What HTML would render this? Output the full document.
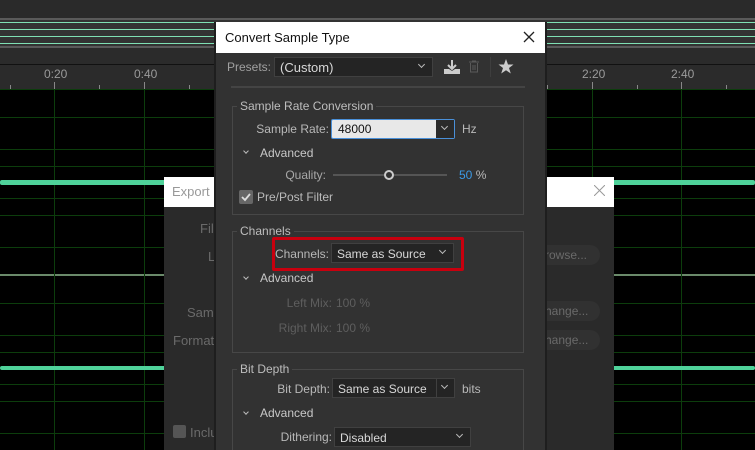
<!DOCTYPE html>
<html style="overflow:hidden;width:755px;height:450px"><head><style>
*{margin:0;padding:0;box-sizing:border-box}
body{width:755px;height:450px;overflow:hidden;background:#000;font-family:"Liberation Sans",sans-serif;position:relative}
.a{position:absolute}
.t{position:absolute;font-size:12px;color:#b8b8b8;white-space:nowrap}
.d{color:#6a6a6a}
.hl{position:absolute;left:0;width:755px;height:1px;background:#0c3d0c}
.vl{position:absolute;top:89px;width:1px;height:361px;background:#0c3d0c}
.wave{position:absolute;left:0;width:755px;height:5px;background:#4fd29a;border-radius:2px}
.box{position:absolute;border:1px solid #474747}
.dd{position:absolute;background:#242424;border:1px solid #404040;color:#d8d8d8;font-size:12px;padding:3px 0 0 5px}
.chev{position:absolute;right:8px;top:4px;width:5px;height:5px;border-right:1px solid #bbb;border-bottom:1px solid #bbb;transform:rotate(45deg)}
.sec{position:absolute;font-size:12px;color:#bdbdbd;background:#323232;padding:0 3px}
</style></head><body>
<div class="a" style="left:0;top:0;width:755px;height:18px;background:#2a2a2a"></div>
<div class="a" style="left:0;top:18px;width:755px;height:30px;background:#333"></div>
<div class="a" style="left:0;top:18px;width:755px;height:2px;background:#5a5a5a"></div>
<div class="a" style="left:0;top:46px;width:755px;height:2px;background:#5a5a5a"></div>
<div class="a" style="left:0;top:22px;width:755px;height:1px;background:#7fe0b4"></div>
<div class="a" style="left:0;top:29px;width:755px;height:1px;background:#7fe0b4"></div>
<div class="a" style="left:0;top:36px;width:755px;height:1px;background:#7fe0b4"></div>
<div class="a" style="left:0;top:43px;width:755px;height:1px;background:#7fe0b4"></div>
<div class="a" style="left:0;top:48px;width:755px;height:16px;background:#2b2b2b"></div>
<div class="a" style="left:0;top:64px;width:755px;height:1px;background:#111"></div>
<div class="a" style="left:0;top:65px;width:755px;height:24px;background:#2b2b2b"></div>
<div class="t" style="left:44px;top:67px;color:#9a9a9a">0:20</div>
<div class="t" style="left:134px;top:67px;color:#9a9a9a">0:40</div>
<div class="t" style="left:582px;top:67px;color:#9a9a9a">2:20</div>
<div class="t" style="left:671px;top:67px;color:#9a9a9a">2:40</div>
<div class="a" style="left:10px;top:85px;width:1px;height:4px;background:#888"></div>
<div class="a" style="left:54px;top:82px;width:1px;height:7px;background:#888"></div>
<div class="a" style="left:99px;top:85px;width:1px;height:4px;background:#888"></div>
<div class="a" style="left:144px;top:82px;width:1px;height:7px;background:#888"></div>
<div class="a" style="left:189px;top:85px;width:1px;height:4px;background:#888"></div>
<div class="a" style="left:547px;top:85px;width:1px;height:4px;background:#888"></div>
<div class="a" style="left:592px;top:82px;width:1px;height:7px;background:#888"></div>
<div class="a" style="left:637px;top:85px;width:1px;height:4px;background:#888"></div>
<div class="a" style="left:681px;top:82px;width:1px;height:7px;background:#888"></div>
<div class="a" style="left:726px;top:85px;width:1px;height:4px;background:#888"></div>
<div class="hl" style="top:89px"></div><div class="hl" style="top:117px"></div><div class="hl" style="top:149px"></div><div class="hl" style="top:166px"></div><div class="hl" style="top:198px"></div><div class="hl" style="top:215px"></div><div class="hl" style="top:247px"></div>
<div class="a" style="left:0;top:274px;width:755px;height:2px;background:#6a8a6a"></div>
<div class="hl" style="top:303px"></div><div class="hl" style="top:335px"></div><div class="hl" style="top:352px"></div><div class="hl" style="top:384px"></div><div class="hl" style="top:401px"></div><div class="hl" style="top:433px"></div>
<div class="vl" style="left:54px"></div><div class="vl" style="left:144px"></div><div class="vl" style="left:592px"></div><div class="vl" style="left:681px"></div>
<div class="wave" style="top:180px"></div>
<div class="wave" style="top:366px;height:4px"></div>
<div class="a" style="left:164px;top:177px;width:450px;height:273px;background:#2a2a2a"></div>
<div class="a" style="left:164px;top:177px;width:450px;height:30px;background:#fff"></div>
<div class="t" style="left:172px;top:184px;font-size:13px;color:#999">Export F</div>
<svg class="a" style="left:594px;top:185px" width="11" height="11"><path d="M0 0L11 11M11 0L0 11" stroke="#999" stroke-width="1"/></svg>
<div class="t d" style="left:200px;top:221px;font-size:13px">File</div>
<div class="t d" style="left:208px;top:249px;font-size:13px">Lo</div>
<div class="t d" style="left:187px;top:305px;font-size:13px">Samp</div>
<div class="t d" style="left:173px;top:333px;font-size:13px">Format S</div>
<div class="a" style="left:173px;top:425px;width:13px;height:13px;background:#555;border-radius:2px"></div>
<div class="t d" style="left:190px;top:425px;font-size:13px">Inclu</div>
<div class="a" style="left:530px;top:245px;width:70px;height:20px;background:#313131;border-radius:10px"></div>
<div class="t d" style="left:545px;top:248px">rowse...</div>
<div class="a" style="left:530px;top:301px;width:70px;height:20px;background:#313131;border-radius:10px"></div>
<div class="t d" style="left:545px;top:304px">hange...</div>
<div class="a" style="left:530px;top:330px;width:70px;height:20px;background:#313131;border-radius:10px"></div>
<div class="t d" style="left:545px;top:333px">hange...</div>
<div class="a" style="left:214px;top:22px;width:333px;height:428px;background:#1e1e1e"></div>
<div class="a" style="left:216px;top:22px;width:329px;height:428px;background:#323232"></div>
<div class="a" style="left:216px;top:22px;width:329px;height:31px;background:#fff"></div>
<div class="t" style="left:225px;top:30px;font-size:13px;color:#111">Convert Sample Type</div>
<svg class="a" style="left:523px;top:31px" width="12" height="12"><path d="M1 1L11 11M11 1L1 11" stroke="#222" stroke-width="1.3"/></svg>
<div class="t" style="right:484px;top:60px;color:#a0a0a0">Presets:</div>
<div class="dd" style="left:274px;top:57px;width:159px;height:20px;font-size:13px;padding-top:2px">(Custom)<div class="chev"></div></div>
<svg class="a" style="left:443px;top:59px" width="18" height="16"><path d="M9 1V9M5 6L9 10L13 6" stroke="#ccc" stroke-width="2" fill="none"/><path d="M1 10H6L9 12L12 10H17V15H1Z" fill="#ccc"/></svg>
<svg class="a" style="left:469px;top:60px" width="10" height="13"><path d="M0 2H10M3 1H7M1.5 3V12H8.5V3M4 5V10M6 5V10" stroke="#5a5a5a" fill="none"/></svg>
<div class="a" style="left:490px;top:57px;width:1px;height:20px;background:#3e3e3e"></div>
<svg class="a" style="left:498px;top:59px" width="16" height="15"><path d="M8 0L10 5.5H15.5L11 9L12.8 14.5L8 11.2L3.2 14.5L5 9L0.5 5.5H6Z" fill="#ccc"/></svg>
<div class="a" style="left:231px;top:86px;width:294px;height:2px;background:#444"></div>
<div class="box" style="left:232px;top:106px;width:292px;height:109px"></div>
<div class="sec" style="left:237px;top:99px">Sample Rate Conversion</div>
<div class="t" style="right:426px;top:122px">Sample Rate:</div>
<div class="a" style="left:331px;top:119px;width:124px;height:20px;background:#e8e8e8;border:1px solid #4a90d9;border-radius:2px"></div>
<div class="t" style="left:338px;top:122px;color:#111">48000</div>
<div class="a" style="left:436px;top:120px;width:18px;height:18px;background:#2a2a2a"></div>
<div class="chev" style="left:442px;right:auto;top:124px"></div>
<div class="t" style="left:462px;top:122px">Hz</div>
<div class="chev" style="left:244px;right:auto;top:149px;width:4px;height:4px"></div>
<div class="t" style="left:260px;top:146px;color:#c8c8c8">Advanced</div>
<div class="t" style="right:429px;top:168px;color:#a8a8a8">Quality:</div>
<div class="a" style="left:333px;top:174px;width:114px;height:2px;background:#555"></div>
<div class="a" style="left:384px;top:170px;width:10px;height:10px;border:2px solid #ccc;border-radius:50%;background:#323232"></div>
<div class="t" style="left:459px;top:168px;color:#3b9ae6">50 <span style="color:#b8b8b8">%</span></div>
<div class="a" style="left:239px;top:190px;width:14px;height:14px;background:#666;border-radius:2px"></div>
<svg class="a" style="left:240px;top:191px" width="12" height="12"><path d="M2 6L5 9L10 3" stroke="#ddd" stroke-width="1.8" fill="none"/></svg>
<div class="t" style="left:257px;top:190px;color:#bbb">Pre/Post Filter</div>
<div class="box" style="left:232px;top:231px;width:292px;height:122px"></div>
<div class="sec" style="left:237px;top:224px">Channels</div>
<div class="t" style="right:426px;top:247px">Channels:</div>
<div class="dd" style="left:331px;top:243px;width:123px;height:20px">Same as Source<div class="chev"></div></div>
<div class="a" style="left:272px;top:237px;width:192px;height:34px;border:3px solid #c8000e;border-radius:2px"></div>
<div class="chev" style="left:244px;right:auto;top:275px;width:4px;height:4px"></div>
<div class="t" style="left:260px;top:271px;color:#c8c8c8">Advanced</div>
<div class="t" style="right:423px;top:296px;color:#5e5e5e">Left Mix:</div>
<div class="t" style="left:336px;top:296px;color:#5e5e5e">100 %</div>
<div class="t" style="right:423px;top:321px;color:#5e5e5e">Right Mix:</div>
<div class="t" style="left:336px;top:321px;color:#5e5e5e">100 %</div>
<div class="box" style="left:232px;top:369px;width:292px;height:90px"></div>
<div class="sec" style="left:237px;top:362px">Bit Depth</div>
<div class="t" style="right:425px;top:382px">Bit Depth:</div>
<div class="dd" style="left:332px;top:378px;width:123px;height:20px">Same as Source</div>
<div class="a" style="left:436px;top:379px;width:1px;height:18px;background:#404040"></div>
<div class="chev" style="left:442px;right:auto;top:383px"></div>
<div class="t" style="left:462px;top:382px">bits</div>
<div class="chev" style="left:244px;right:auto;top:410px;width:4px;height:4px"></div>
<div class="t" style="left:260px;top:406px;color:#c8c8c8">Advanced</div>
<div class="t" style="right:423px;top:430px">Dithering:</div>
<div class="dd" style="left:334px;top:427px;width:137px;height:20px">Disabled<div class="chev"></div></div>
</body></html>
